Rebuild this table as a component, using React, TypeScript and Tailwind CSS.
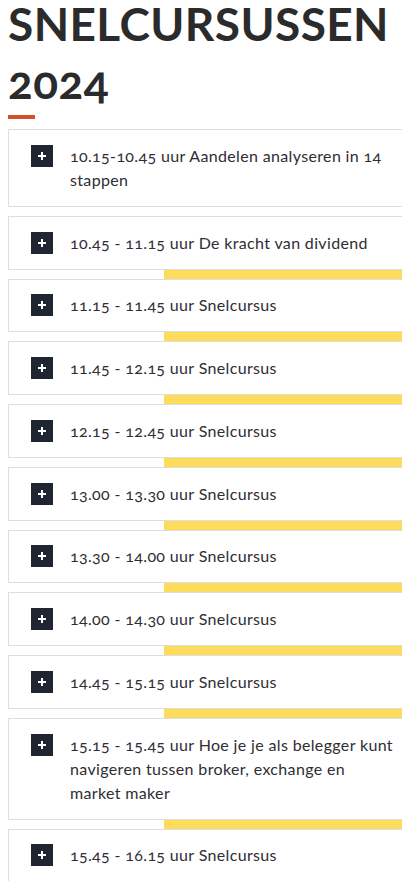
import React from "react";

type Session = {
  lines: string[];
  stripe: boolean;
};

const sessions: Session[] = [
  { lines: ["10.15-10.45 uur Aandelen analyseren in 14", "stappen"], stripe: false },
  { lines: ["10.45 - 11.15 uur De kracht van dividend"], stripe: true },
  { lines: ["11.15 - 11.45 uur Snelcursus"], stripe: true },
  { lines: ["11.45 - 12.15 uur Snelcursus"], stripe: true },
  { lines: ["12.15 - 12.45 uur Snelcursus"], stripe: true },
  { lines: ["13.00 - 13.30 uur Snelcursus"], stripe: true },
  { lines: ["13.30 - 14.00 uur Snelcursus"], stripe: true },
  { lines: ["14.00 - 14.30 uur Snelcursus"], stripe: true },
  { lines: ["14.45 - 15.15 uur Snelcursus"], stripe: true },
  {
    lines: [
      "15.15 - 15.45 uur Hoe je je als belegger kunt",
      "navigeren tussen broker, exchange en",
      "market maker",
    ],
    stripe: true,
  },
  { lines: ["15.45 - 16.15 uur Snelcursus"], stripe: true },
];

function PlusBox() {
  return (
    <span className="mt-[1px] flex h-[22px] w-[22px] shrink-0 items-center justify-center bg-[#1f2531]">
      <svg width="10" height="10" viewBox="0 0 10 10">
        <path d="M5 1v8M1 5h8" stroke="#ffffff" strokeWidth="2" />
      </svg>
    </span>
  );
}

export default function App() {
  return (
    <div className="h-[881px] w-[402px] overflow-hidden bg-white font-['Lato',sans-serif] text-[#2e2e33]">
      <div className="pl-[8px]">
        <h1 className="text-[46px] font-bold uppercase tracking-[0.4px] text-[#2b2b2b] [font-variant-numeric:oldstyle-nums]">
          <span className="block leading-[48px]">Snelcursussen</span>
          <span className="mt-[10px] block leading-[48px]">2024</span>
        </h1>
        <div className="mt-[9px] mb-[10px] h-[4px] w-[27px] bg-[#cf5228]" />

        <div className="flex w-[440px] flex-col">
          {sessions.map((s, i) => (
            <div key={i} className="flex flex-col">
              <button
                type="button"
                className="flex items-start gap-[17px] border border-[#dedede] bg-white py-[13.875px] pl-[22px] text-left"
              >
                <PlusBox />
                <span className="whitespace-nowrap text-[16px] leading-[24px] tracking-[0.35px] [font-variant-numeric:oldstyle-nums]">
                  {s.lines.map((l, j) => (
                    <React.Fragment key={j}>
                      {j > 0 && <br />}
                      {l}
                    </React.Fragment>
                  ))}
                </span>
              </button>
              <div className={s.stripe ? "ml-[156px] h-[9px] bg-[#fddc5c]" : "h-[9px]"} />
            </div>
          ))}
        </div>
      </div>
    </div>
  );
}
